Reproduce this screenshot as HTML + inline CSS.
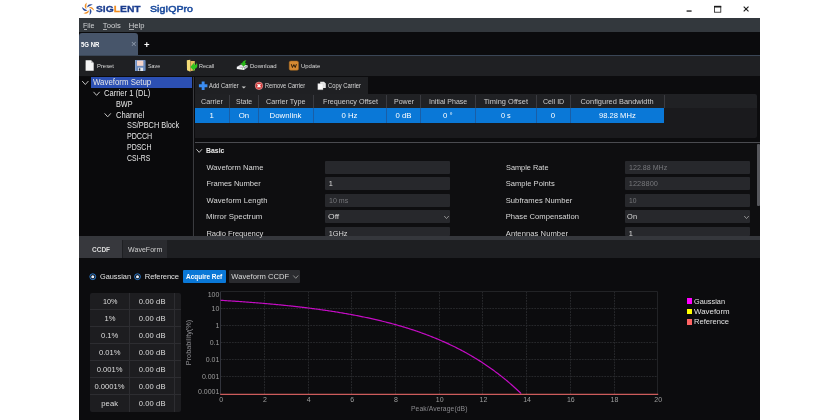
<!DOCTYPE html>
<html><head><meta charset="utf-8"><title>SigIQPro</title>
<style>
html,body{margin:0;padding:0;background:#fff;}
body{width:840px;height:420px;position:relative;overflow:hidden;font-family:"Liberation Sans",sans-serif;}
.r{position:absolute;}
.tx{position:absolute;left:0;top:0;width:840px;height:420px;will-change:transform;}
.t{position:absolute;white-space:nowrap;}
svg{position:absolute;left:0;top:0;}
u{text-decoration:underline;text-underline-offset:0.5px;text-decoration-thickness:0.6px;}
</style></head><body>
<div class="r" style="left:79.30px;top:17.80px;width:680.70px;height:14.40px;background:#33383d;"></div>
<div class="r" style="left:79.30px;top:32.20px;width:680.70px;height:23.00px;background:#0b0b0d;"></div>
<div class="r" style="left:79.30px;top:33.00px;width:58.70px;height:22.50px;background:#47556a;border-radius:3px 3px 0 0;"></div>
<div class="r" style="left:79.30px;top:55.00px;width:680.70px;height:1.00px;background:#3a4656;"></div>
<div class="r" style="left:79.30px;top:56.00px;width:680.70px;height:20.30px;background:#1f2023;"></div>
<div class="r" style="left:79.30px;top:76.30px;width:680.70px;height:343.70px;background:#0c0c0e;"></div>
<div class="r" style="left:79.30px;top:76.80px;width:113.00px;height:159.50px;background:#0a0a0c;"></div>
<div class="r" style="left:91.25px;top:77.00px;width:101.00px;height:11.00px;background:#2c50b4;"></div>
<div class="r" style="left:193.40px;top:76.80px;width:0.90px;height:159.50px;background:#3a3b3f;"></div>
<div class="r" style="left:194.60px;top:77.00px;width:173.40px;height:17.00px;background:#1f2023;"></div>
<div class="r" style="left:194.60px;top:94.00px;width:562.90px;height:14.00px;background:#202124;border-radius:0 2px 0 0;"></div>
<div class="r" style="left:194.60px;top:108.00px;width:562.90px;height:30.00px;background:#1a1a1d;border-radius:0 0 2px 0;"></div>
<div class="r" style="left:194.60px;top:108.00px;width:469.70px;height:14.50px;background:#0a78d7;"></div>
<div class="r" style="left:228.75px;top:95.00px;width:1.00px;height:12.50px;background:#3a3b40;"></div>
<div class="r" style="left:258.25px;top:95.00px;width:1.00px;height:12.50px;background:#3a3b40;"></div>
<div class="r" style="left:312.70px;top:95.00px;width:1.00px;height:12.50px;background:#3a3b40;"></div>
<div class="r" style="left:385.75px;top:95.00px;width:1.00px;height:12.50px;background:#3a3b40;"></div>
<div class="r" style="left:420.00px;top:95.00px;width:1.00px;height:12.50px;background:#3a3b40;"></div>
<div class="r" style="left:474.75px;top:95.00px;width:1.00px;height:12.50px;background:#3a3b40;"></div>
<div class="r" style="left:535.75px;top:95.00px;width:1.00px;height:12.50px;background:#3a3b40;"></div>
<div class="r" style="left:570.25px;top:95.00px;width:1.00px;height:12.50px;background:#3a3b40;"></div>
<div class="r" style="left:663.75px;top:95.00px;width:1.00px;height:12.50px;background:#3a3b40;"></div>
<div class="r" style="left:228.75px;top:108.00px;width:1.00px;height:14.50px;background:#1a5ea6;"></div>
<div class="r" style="left:258.25px;top:108.00px;width:1.00px;height:14.50px;background:#1a5ea6;"></div>
<div class="r" style="left:312.70px;top:108.00px;width:1.00px;height:14.50px;background:#1a5ea6;"></div>
<div class="r" style="left:385.75px;top:108.00px;width:1.00px;height:14.50px;background:#1a5ea6;"></div>
<div class="r" style="left:420.00px;top:108.00px;width:1.00px;height:14.50px;background:#1a5ea6;"></div>
<div class="r" style="left:474.75px;top:108.00px;width:1.00px;height:14.50px;background:#1a5ea6;"></div>
<div class="r" style="left:535.75px;top:108.00px;width:1.00px;height:14.50px;background:#1a5ea6;"></div>
<div class="r" style="left:570.25px;top:108.00px;width:1.00px;height:14.50px;background:#1a5ea6;"></div>
<div class="r" style="left:194.60px;top:142.00px;width:565.40px;height:1.00px;background:#4a4b50;"></div>
<div class="r" style="left:194.60px;top:143.00px;width:565.40px;height:93.30px;background:#0e0e10;"></div>
<div class="r" style="left:757.00px;top:144.00px;width:3.00px;height:61.50px;background:#56575c;border-radius:1px;"></div>
<div class="r" style="left:325.00px;top:160.90px;width:125.20px;height:13.00px;background:#27282c;border-radius:1px;"></div>
<div class="r" style="left:625.00px;top:160.90px;width:125.20px;height:13.00px;background:#27282c;border-radius:1px;"></div>
<div class="r" style="left:325.00px;top:177.30px;width:125.20px;height:13.00px;background:#27282c;border-radius:1px;"></div>
<div class="r" style="left:625.00px;top:177.30px;width:125.20px;height:13.00px;background:#27282c;border-radius:1px;"></div>
<div class="r" style="left:325.00px;top:193.70px;width:125.20px;height:13.00px;background:#27282c;border-radius:1px;"></div>
<div class="r" style="left:625.00px;top:193.70px;width:125.20px;height:13.00px;background:#27282c;border-radius:1px;"></div>
<div class="r" style="left:325.00px;top:210.10px;width:125.20px;height:13.00px;background:#27282c;border-radius:1px;"></div>
<div class="r" style="left:625.00px;top:210.10px;width:125.20px;height:13.00px;background:#27282c;border-radius:1px;"></div>
<div class="r" style="left:325.00px;top:226.50px;width:125.20px;height:9.80px;background:#27282c;border-radius:1px;"></div>
<div class="r" style="left:625.00px;top:226.50px;width:125.20px;height:9.80px;background:#27282c;border-radius:1px;"></div>
<div class="r" style="left:79.30px;top:236.30px;width:680.70px;height:3.70px;background:#35373c;"></div>
<div class="r" style="left:79.30px;top:240.00px;width:680.70px;height:18.00px;background:#1e1f22;"></div>
<div class="r" style="left:79.30px;top:239.60px;width:42.90px;height:18.40px;background:#37383d;"></div>
<div class="r" style="left:123.10px;top:239.60px;width:43.80px;height:18.40px;background:#2a2b2f;"></div>
<div class="r" style="left:79.30px;top:258.00px;width:680.70px;height:162.00px;background:#0c0c0e;"></div>
<div class="r" style="left:183.00px;top:270.00px;width:43.00px;height:13.00px;background:#0a78d7;border-radius:1px;"></div>
<div class="r" style="left:228.70px;top:270.00px;width:71.30px;height:13.00px;background:#2a2b2f;border-radius:1px;"></div>
<div class="r" style="left:90.00px;top:292.50px;width:91.00px;height:119.10px;background:#1d1d20;border-radius:2px;"></div>
<div class="r" style="left:90.00px;top:309.00px;width:91.00px;height:1.00px;background:#2d2d31;"></div>
<div class="r" style="left:90.00px;top:326.00px;width:91.00px;height:1.00px;background:#2d2d31;"></div>
<div class="r" style="left:90.00px;top:343.00px;width:91.00px;height:1.00px;background:#2d2d31;"></div>
<div class="r" style="left:90.00px;top:360.00px;width:91.00px;height:1.00px;background:#2d2d31;"></div>
<div class="r" style="left:90.00px;top:377.00px;width:91.00px;height:1.00px;background:#2d2d31;"></div>
<div class="r" style="left:90.00px;top:394.00px;width:91.00px;height:1.00px;background:#2d2d31;"></div>
<div class="r" style="left:129.00px;top:292.50px;width:1.00px;height:119.10px;background:#2d2d31;"></div>
<div class="r" style="left:174.00px;top:292.50px;width:1.00px;height:119.10px;background:#2d2d31;"></div>
<div class="r" style="left:83.50px;top:29.10px;width:3.90px;height:0.90px;background:#a9abae;"></div>
<div class="r" style="left:102.80px;top:29.10px;width:4.20px;height:0.90px;background:#a9abae;"></div>
<div class="r" style="left:128.90px;top:29.10px;width:4.90px;height:0.90px;background:#a9abae;"></div>
<div class="r" style="left:686.70px;top:298.35px;width:5.60px;height:5.70px;background:#ff00ff;"></div>
<div class="r" style="left:686.70px;top:308.65px;width:5.60px;height:5.70px;background:#ffff00;"></div>
<div class="r" style="left:686.70px;top:318.95px;width:5.60px;height:5.70px;background:#ff6464;"></div>
<svg width="840" height="420" viewBox="0 0 840 420">
<g stroke="#27282b" stroke-width="1" stroke-dasharray="1.8 1" fill="none"><line x1="220.70" y1="308.50" x2="657.70" y2="308.50"/><line x1="220.70" y1="325.50" x2="657.70" y2="325.50"/><line x1="220.70" y1="342.50" x2="657.70" y2="342.50"/><line x1="220.70" y1="359.50" x2="657.70" y2="359.50"/><line x1="220.70" y1="376.50" x2="657.70" y2="376.50"/><line x1="264.50" y1="291.60" x2="264.50" y2="394.40"/><line x1="308.50" y1="291.60" x2="308.50" y2="394.40"/><line x1="351.50" y1="291.60" x2="351.50" y2="394.40"/><line x1="395.50" y1="291.60" x2="395.50" y2="394.40"/><line x1="439.50" y1="291.60" x2="439.50" y2="394.40"/><line x1="482.50" y1="291.60" x2="482.50" y2="394.40"/><line x1="526.50" y1="291.60" x2="526.50" y2="394.40"/><line x1="570.50" y1="291.60" x2="570.50" y2="394.40"/><line x1="614.50" y1="291.60" x2="614.50" y2="394.40"/></g>
<path d="M220.70 291.50 H657.50 V394.40" stroke="#222326" stroke-width="1" fill="none"/>
<path d="M220.50 291.60 V394.40" stroke="#32343c" stroke-width="1" fill="none"/>
<path d="M220.70 300.32 L221.79 300.39 L222.88 300.46 L223.98 300.52 L225.07 300.59 L226.16 300.66 L227.25 300.73 L228.35 300.80 L229.44 300.87 L230.53 300.94 L231.62 301.01 L232.72 301.08 L233.81 301.15 L234.90 301.22 L236.00 301.30 L237.09 301.37 L238.18 301.45 L239.27 301.52 L240.37 301.60 L241.46 301.67 L242.55 301.75 L243.64 301.83 L244.74 301.91 L245.83 301.99 L246.92 302.07 L248.01 302.15 L249.10 302.23 L250.20 302.31 L251.29 302.40 L252.38 302.48 L253.48 302.57 L254.57 302.65 L255.66 302.74 L256.75 302.83 L257.85 302.91 L258.94 303.00 L260.03 303.09 L261.12 303.18 L262.22 303.27 L263.31 303.37 L264.40 303.46 L265.49 303.55 L266.59 303.65 L267.68 303.74 L268.77 303.84 L269.86 303.94 L270.95 304.04 L272.05 304.13 L273.14 304.23 L274.23 304.34 L275.32 304.44 L276.42 304.54 L277.51 304.65 L278.60 304.75 L279.69 304.86 L280.79 304.96 L281.88 305.07 L282.97 305.18 L284.06 305.29 L285.16 305.40 L286.25 305.51 L287.34 305.63 L288.43 305.74 L289.53 305.86 L290.62 305.97 L291.71 306.09 L292.80 306.21 L293.90 306.33 L294.99 306.45 L296.08 306.57 L297.17 306.69 L298.27 306.82 L299.36 306.94 L300.45 307.07 L301.54 307.20 L302.64 307.33 L303.73 307.46 L304.82 307.59 L305.91 307.72 L307.01 307.86 L308.10 307.99 L309.19 308.13 L310.28 308.27 L311.38 308.41 L312.47 308.55 L313.56 308.69 L314.65 308.83 L315.75 308.98 L316.84 309.13 L317.93 309.27 L319.02 309.42 L320.12 309.57 L321.21 309.73 L322.30 309.88 L323.39 310.04 L324.49 310.19 L325.58 310.35 L326.67 310.51 L327.76 310.67 L328.86 310.84 L329.95 311.00 L331.04 311.17 L332.13 311.34 L333.23 311.51 L334.32 311.68 L335.41 311.85 L336.50 312.02 L337.60 312.20 L338.69 312.38 L339.78 312.56 L340.87 312.74 L341.97 312.93 L343.06 313.11 L344.15 313.30 L345.24 313.49 L346.34 313.68 L347.43 313.87 L348.52 314.07 L349.61 314.26 L350.71 314.46 L351.80 314.66 L352.89 314.87 L353.98 315.07 L355.08 315.28 L356.17 315.49 L357.26 315.70 L358.35 315.91 L359.45 316.13 L360.54 316.35 L361.63 316.57 L362.72 316.79 L363.82 317.02 L364.91 317.24 L366.00 317.47 L367.09 317.70 L368.19 317.94 L369.28 318.17 L370.37 318.41 L371.46 318.65 L372.56 318.90 L373.65 319.14 L374.74 319.39 L375.83 319.64 L376.93 319.90 L378.02 320.15 L379.11 320.41 L380.20 320.68 L381.30 320.94 L382.39 321.21 L383.48 321.48 L384.57 321.75 L385.67 322.03 L386.76 322.30 L387.85 322.59 L388.94 322.87 L390.04 323.16 L391.13 323.45 L392.22 323.74 L393.31 324.04 L394.41 324.34 L395.50 324.64 L396.59 324.95 L397.68 325.26 L398.78 325.57 L399.87 325.88 L400.96 326.20 L402.05 326.52 L403.15 326.85 L404.24 327.18 L405.33 327.51 L406.42 327.85 L407.52 328.19 L408.61 328.53 L409.70 328.88 L410.79 329.23 L411.89 329.58 L412.98 329.94 L414.07 330.30 L415.16 330.67 L416.26 331.04 L417.35 331.41 L418.44 331.79 L419.53 332.17 L420.63 332.55 L421.72 332.94 L422.81 333.34 L423.90 333.73 L425.00 334.14 L426.09 334.54 L427.18 334.95 L428.28 335.37 L429.37 335.79 L430.46 336.21 L431.55 336.64 L432.65 337.07 L433.74 337.51 L434.83 337.95 L435.92 338.40 L437.02 338.85 L438.11 339.31 L439.20 339.77 L440.29 340.24 L441.39 340.71 L442.48 341.19 L443.57 341.67 L444.66 342.16 L445.76 342.65 L446.85 343.15 L447.94 343.65 L449.03 344.16 L450.13 344.67 L451.22 345.19 L452.31 345.72 L453.40 346.25 L454.50 346.79 L455.59 347.33 L456.68 347.88 L457.77 348.43 L458.87 348.99 L459.96 349.56 L461.05 350.13 L462.14 350.71 L463.24 351.30 L464.33 351.89 L465.42 352.49 L466.51 353.09 L467.61 353.70 L468.70 354.32 L469.79 354.94 L470.88 355.58 L471.98 356.21 L473.07 356.86 L474.16 357.51 L475.25 358.17 L476.35 358.84 L477.44 359.51 L478.53 360.20 L479.62 360.88 L480.72 361.58 L481.81 362.29 L482.90 363.00 L483.99 363.72 L485.09 364.45 L486.18 365.18 L487.27 365.93 L488.36 366.68 L489.46 367.44 L490.55 368.21 L491.64 368.99 L492.73 369.77 L493.83 370.57 L494.92 371.37 L496.01 372.18 L497.10 373.00 L498.20 373.83 L499.29 374.67 L500.38 375.52 L501.47 376.38 L502.57 377.25 L503.66 378.13 L504.75 379.01 L505.84 379.91 L506.94 380.82 L508.03 381.74 L509.12 382.66 L510.21 383.60 L511.31 384.55 L512.40 385.51 L513.49 386.48 L514.58 387.46 L515.68 388.45 L516.77 389.45 L517.86 390.46 L518.95 391.49 L520.05 392.53 L521.14 393.57" stroke="#c40cc4" stroke-width="1.2" fill="none"/>
<line x1="220.20" y1="394.40" x2="658.20" y2="394.40" stroke="#cd5c5c" stroke-width="1.3"/>
<path d="M82.20 81.06 l3.10 3.47 l3.10 -3.47" stroke="#c2c2c2" stroke-width="1.00" fill="none"/>
<path d="M93.50 91.86 l3.10 3.47 l3.10 -3.47" stroke="#c2c2c2" stroke-width="1.00" fill="none"/>
<path d="M104.60 113.36 l3.10 3.47 l3.10 -3.47" stroke="#c2c2c2" stroke-width="1.00" fill="none"/>
<path d="M196.40 149.23 l2.80 3.14 l2.80 -3.14" stroke="#c2c2c2" stroke-width="1.00" fill="none"/>
<path d="M444.20 216.01 l2.30 2.58 l2.30 -2.58" stroke="#a4a4a4" stroke-width="0.80" fill="none"/>
<path d="M744.20 216.01 l2.30 2.58 l2.30 -2.58" stroke="#a4a4a4" stroke-width="0.80" fill="none"/>
<path d="M293.25 275.50 l2.50 2.80 l2.50 -2.80" stroke="#a4a4a4" stroke-width="0.80" fill="none"/>
<rect x="686.6" y="10.4" width="5" height="1.3" fill="#1a1a1a"/>
<rect x="714.6" y="6.4" width="6.2" height="5.8" fill="none" stroke="#1a1a1a" stroke-width="0.8"/><rect x="714.2" y="5.8" width="7" height="1.7" fill="#1a1a1a"/>
<path d="M743.7 6.6 l4.8 4.8 M748.5 6.6 l-4.8 4.8" stroke="#1a1a1a" stroke-width="1.1"/>
<circle cx="92.75" cy="276.7" r="2.9" fill="#0c0c0e" stroke="#2f86e0" stroke-width="0.9"/><circle cx="92.75" cy="276.7" r="1.5" fill="#eaf2ff"/>
<circle cx="137.50" cy="276.7" r="2.9" fill="#0c0c0e" stroke="#2f86e0" stroke-width="0.9"/><circle cx="137.50" cy="276.7" r="1.5" fill="#eaf2ff"/>
<path d="M241.6 86.6 h4.4 l-2.2 2 z" fill="#c8c8c8"/>
<g transform="translate(88.1 8.9)"><path d="M0.6 -1.6 Q4.8 -3.3 6.2 1.9 Q3.4 -0.2 0.6 -1.6 Z" fill="#f0922b" transform="rotate(0)"/><path d="M0.6 -1.6 Q4.8 -3.3 6.2 1.9 Q3.4 -0.2 0.6 -1.6 Z" fill="#2b4c9c" transform="rotate(60)"/><path d="M0.6 -1.6 Q4.8 -3.3 6.2 1.9 Q3.4 -0.2 0.6 -1.6 Z" fill="#f0922b" transform="rotate(120)"/><path d="M0.6 -1.6 Q4.8 -3.3 6.2 1.9 Q3.4 -0.2 0.6 -1.6 Z" fill="#2b4c9c" transform="rotate(180)"/><path d="M0.6 -1.6 Q4.8 -3.3 6.2 1.9 Q3.4 -0.2 0.6 -1.6 Z" fill="#f0922b" transform="rotate(240)"/><path d="M0.6 -1.6 Q4.8 -3.3 6.2 1.9 Q3.4 -0.2 0.6 -1.6 Z" fill="#2b4c9c" transform="rotate(300)"/></g>
<path d="M85.6 60.2 h5.4 l2.7 2.7 v7.8 h-8.1 z" fill="#f4f4f4"/><path d="M91 60.2 v2.7 h2.7 z" fill="#c4c4c4"/>
<rect x="135" y="60" width="10.6" height="11" rx="0.8" fill="#6c8bbd"/><rect x="135" y="60" width="1.2" height="11" fill="#88a4d0"/><rect x="137" y="60.6" width="6.3" height="5.2" fill="#f6d8ce"/><path d="M137 62.4 h6.3 M137 64.1 h6.3" stroke="#eec4b8" stroke-width="0.4"/><rect x="138" y="67.7" width="5.1" height="3.3" fill="#e4e8ee"/><rect x="138.8" y="68.3" width="1.5" height="2.3" fill="#2c3c5c"/>
<path d="M186.8 60.2 L190.3 59.8 L190.4 71.8 L187 70.2 Z" fill="#f3dc78"/><path d="M190.4 61 H194.8 V70.3 L190.4 71.3 Z" fill="#e6bc5c"/><path d="M190.3 67 L194.3 62.6 L194.3 64.9 Q196.9 64.7 196.7 62.2 Q198.8 67.9 194.3 69.1 L194.3 71.2 Z" fill="#2fc41f"/>
<path d="M236.8 66.8 L241 64.4 L247.8 65.2 L244 67.8 Z" fill="#dedee3"/><path d="M236.8 66.8 L244 67.8 V69.9 L236.8 68.9 Z" fill="#f7f7f9"/><path d="M244 67.8 L247.8 65.2 V67.2 L244 69.9 Z" fill="#bfc0c8"/><circle cx="242.4" cy="68.8" r="0.45" fill="#38c028"/><path d="M246.4 60.2 Q242.6 60.6 242.2 63.2 L240.4 63.2 L243.6 66.8 L246.6 63.2 L245 63.2 Q245 61.6 246.4 60.2 Z" fill="#28b818"/>
<rect x="289.2" y="61" width="9.3" height="9.3" rx="1.6" fill="#d68a32" stroke="#9c6420" stroke-width="0.5"/><path d="M291.3 64.2 l1.15 3.3 l1.4 -2.9 l1.4 2.9 l1.15 -3.3" stroke="#24180a" stroke-width="0.95" fill="none" stroke-linejoin="round"/>
<path d="M201.7 81.6 h2.9 v2.75 h2.8 v2.9 h-2.8 v2.75 h-2.9 v-2.75 h-2.8 v-2.9 h2.8 z" fill="#3b8df2"/>
<circle cx="259" cy="85.8" r="3.7" fill="#d23434" stroke="#e9a8a8" stroke-width="0.7"/><path d="M257.5 84.3 l3 3 M260.5 84.3 l-3 3" stroke="#fff" stroke-width="1.3"/>
<path d="M320.2 81.7 h3.8 l1.8 1.8 v4.6 h-5.6 z" fill="#e6e6e6"/><path d="M317.8 83.6 h5.2 v6.1 h-5.2 z" fill="#fafafa" stroke="#bdbdbd" stroke-width="0.3"/>
</svg>
<div class="tx">
<div class="t" style="left:83.40px;top:21px;font-size:7.60px;line-height:10px;color:#d2d4d6;transform:scaleX(0.9390);transform-origin:0 50%;">File</div>
<div class="t" style="left:102.75px;top:21px;font-size:7.60px;line-height:10px;color:#d2d4d6;letter-spacing:0.102px;">Tools</div>
<div class="t" style="left:128.75px;top:21px;font-size:7.60px;line-height:10px;color:#d2d4d6;letter-spacing:0.073px;">Help</div>
<div class="t" style="left:80.60px;top:40px;font-size:7.00px;line-height:9px;color:#ffffff;font-weight:700;transform:scaleX(0.8601);transform-origin:0 50%;">5G NR</div>
<div class="t" style="left:131.03px;top:38px;font-size:9.50px;line-height:12px;color:#97a2b2;">×</div>
<div class="t" style="left:143.93px;top:39px;font-size:9.50px;line-height:12px;color:#ffffff;font-weight:700;">+</div>
<div class="t" style="left:96.50px;top:62px;font-size:6.20px;line-height:8px;color:#dadada;transform:scaleX(0.9487);transform-origin:0 50%;">Preset</div>
<div class="t" style="left:147.75px;top:62px;font-size:6.20px;line-height:8px;color:#dadada;transform:scaleX(0.8668);transform-origin:0 50%;">Save</div>
<div class="t" style="left:198.75px;top:62px;font-size:6.20px;line-height:8px;color:#dadada;transform:scaleX(0.8851);transform-origin:0 50%;">Recall</div>
<div class="t" style="left:249.50px;top:62px;font-size:6.20px;line-height:8px;color:#dadada;transform:scaleX(0.9701);transform-origin:0 50%;">Download</div>
<div class="t" style="left:300.75px;top:62px;font-size:6.20px;line-height:8px;color:#dadada;transform:scaleX(0.9628);transform-origin:0 50%;">Update</div>
<div class="t" style="left:93.00px;top:77px;font-size:8.20px;line-height:11px;color:#e6e6e6;transform:scaleX(0.9586);transform-origin:0 50%;">Waveform Setup</div>
<div class="t" style="left:104.25px;top:88px;font-size:8.20px;line-height:11px;color:#e6e6e6;transform:scaleX(0.9228);transform-origin:0 50%;">Carrier 1 (DL)</div>
<div class="t" style="left:115.50px;top:99px;font-size:8.20px;line-height:11px;color:#e6e6e6;transform:scaleX(0.8834);transform-origin:0 50%;">BWP</div>
<div class="t" style="left:115.50px;top:110px;font-size:8.20px;line-height:11px;color:#e6e6e6;transform:scaleX(0.9248);transform-origin:0 50%;">Channel</div>
<div class="t" style="left:126.75px;top:120px;font-size:8.20px;line-height:11px;color:#e6e6e6;transform:scaleX(0.8958);transform-origin:0 50%;">SS/PBCH Block</div>
<div class="t" style="left:126.75px;top:131px;font-size:8.20px;line-height:11px;color:#e6e6e6;transform:scaleX(0.8660);transform-origin:0 50%;">PDCCH</div>
<div class="t" style="left:126.75px;top:142px;font-size:8.20px;line-height:11px;color:#e6e6e6;transform:scaleX(0.8535);transform-origin:0 50%;">PDSCH</div>
<div class="t" style="left:126.75px;top:153px;font-size:8.20px;line-height:11px;color:#e6e6e6;transform:scaleX(0.8366);transform-origin:0 50%;">CSI-RS</div>
<div class="t" style="left:209.00px;top:82px;font-size:6.40px;line-height:8px;color:#d8d8d8;transform:scaleX(0.9091);transform-origin:0 50%;">Add Carrier</div>
<div class="t" style="left:264.75px;top:82px;font-size:6.40px;line-height:8px;color:#d8d8d8;transform:scaleX(0.8911);transform-origin:0 50%;">Remove Carrier</div>
<div class="t" style="left:327.50px;top:82px;font-size:6.40px;line-height:8px;color:#d8d8d8;transform:scaleX(0.9097);transform-origin:0 50%;">Copy Carrier</div>
<div class="t" style="left:200.60px;top:97px;font-size:7.40px;line-height:10px;color:#cdcdcd;transform:scaleX(0.9685);transform-origin:0 50%;">Carrier</div>
<div class="t" style="left:235.75px;top:97px;font-size:7.40px;line-height:10px;color:#cdcdcd;transform:scaleX(0.9404);transform-origin:0 50%;">State</div>
<div class="t" style="left:266.00px;top:97px;font-size:7.40px;line-height:10px;color:#cdcdcd;transform:scaleX(0.9734);transform-origin:0 50%;">Carrier Type</div>
<div class="t" style="left:322.50px;top:97px;font-size:7.40px;line-height:10px;color:#cdcdcd;transform:scaleX(0.9713);transform-origin:0 50%;">Frequency Offset</div>
<div class="t" style="left:393.75px;top:97px;font-size:7.40px;line-height:10px;color:#cdcdcd;transform:scaleX(0.9535);transform-origin:0 50%;">Power</div>
<div class="t" style="left:428.75px;top:97px;font-size:7.40px;line-height:10px;color:#cdcdcd;transform:scaleX(0.9488);transform-origin:0 50%;">Initial Phase</div>
<div class="t" style="left:483.75px;top:97px;font-size:7.40px;line-height:10px;color:#cdcdcd;letter-spacing:0.055px;">Timing Offset</div>
<div class="t" style="left:542.50px;top:97px;font-size:7.40px;line-height:10px;color:#cdcdcd;transform:scaleX(0.9570);transform-origin:0 50%;">Cell ID</div>
<div class="t" style="left:580.50px;top:97px;font-size:7.40px;line-height:10px;color:#cdcdcd;letter-spacing:0.023px;">Configured Bandwidth</div>
<div class="t" style="left:209.58px;top:111px;font-size:7.80px;line-height:10px;color:#ffffff;">1</div>
<div class="t" style="left:238.75px;top:111px;font-size:7.80px;line-height:10px;color:#ffffff;letter-spacing:-0.155px;">On</div>
<div class="t" style="left:269.50px;top:111px;font-size:7.80px;line-height:10px;color:#ffffff;letter-spacing:0.050px;">Downlink</div>
<div class="t" style="left:341.50px;top:111px;font-size:7.80px;line-height:10px;color:#ffffff;letter-spacing:-0.013px;">0 Hz</div>
<div class="t" style="left:395.50px;top:111px;font-size:7.80px;line-height:10px;color:#ffffff;letter-spacing:-0.015px;">0 dB</div>
<div class="t" style="left:443.00px;top:111px;font-size:7.80px;line-height:10px;color:#ffffff;letter-spacing:-0.062px;">0 °</div>
<div class="t" style="left:500.75px;top:111px;font-size:7.80px;line-height:10px;color:#ffffff;transform:scaleX(0.9370);transform-origin:0 50%;">0 s</div>
<div class="t" style="left:550.83px;top:111px;font-size:7.80px;line-height:10px;color:#ffffff;">0</div>
<div class="t" style="left:598.75px;top:111px;font-size:7.80px;line-height:10px;color:#ffffff;transform:scaleX(0.9744);transform-origin:0 50%;">98.28 MHz</div>
<div class="t" style="left:206.00px;top:146px;font-size:7.40px;line-height:10px;color:#ececec;font-weight:700;transform:scaleX(0.9318);transform-origin:0 50%;">Basic</div>
<div class="t" style="left:206.40px;top:163px;font-size:7.60px;line-height:10px;color:#dadada;letter-spacing:0.031px;">Waveform Name</div>
<div class="t" style="left:505.75px;top:163px;font-size:7.60px;line-height:10px;color:#dadada;transform:scaleX(0.9673);transform-origin:0 50%;">Sample Rate</div>
<div class="t" style="left:628.75px;top:163px;font-size:7.40px;line-height:10px;color:#76777b;transform:scaleX(0.9587);transform-origin:0 50%;">122.88 MHz</div>
<div class="t" style="left:206.40px;top:179px;font-size:7.60px;line-height:10px;color:#dadada;letter-spacing:-0.046px;">Frames Number</div>
<div class="t" style="left:505.75px;top:179px;font-size:7.60px;line-height:10px;color:#dadada;">Sample Points</div>
<div class="t" style="left:328.75px;top:179px;font-size:7.40px;line-height:10px;color:#dadada;">1</div>
<div class="t" style="left:628.75px;top:179px;font-size:7.40px;line-height:10px;color:#76777b;letter-spacing:0.073px;">1228800</div>
<div class="t" style="left:206.40px;top:196px;font-size:7.60px;line-height:10px;color:#dadada;letter-spacing:0.100px;">Waveform Length</div>
<div class="t" style="left:505.75px;top:196px;font-size:7.60px;line-height:10px;color:#dadada;letter-spacing:0.040px;">Subframes Number</div>
<div class="t" style="left:328.75px;top:196px;font-size:7.40px;line-height:10px;color:#76777b;transform:scaleX(0.9553);transform-origin:0 50%;">10 ms</div>
<div class="t" style="left:628.75px;top:196px;font-size:7.40px;line-height:10px;color:#76777b;transform:scaleX(0.9112);transform-origin:0 50%;">10</div>
<div class="t" style="left:206.40px;top:212px;font-size:7.60px;line-height:10px;color:#dadada;transform:scaleX(1.0344);transform-origin:0 50%;">Mirror Spectrum</div>
<div class="t" style="left:505.75px;top:212px;font-size:7.60px;line-height:10px;color:#dadada;letter-spacing:0.034px;">Phase Compensation</div>
<div class="t" style="left:327.50px;top:212px;font-size:7.40px;line-height:10px;color:#dadada;transform:scaleX(1.1558);transform-origin:0 50%;">Off</div>
<div class="t" style="left:627.00px;top:212px;font-size:7.40px;line-height:10px;color:#dadada;letter-spacing:0.129px;">On</div>
<div class="t" style="left:206.40px;top:229px;font-size:7.60px;line-height:10px;color:#dadada;letter-spacing:-0.073px;">Radio Frequency</div>
<div class="t" style="left:505.75px;top:229px;font-size:7.60px;line-height:10px;color:#dadada;letter-spacing:0.071px;">Antennas Number</div>
<div class="t" style="left:328.75px;top:229px;font-size:7.40px;line-height:10px;color:#dadada;letter-spacing:-0.055px;">1GHz</div>
<div class="t" style="left:628.75px;top:229px;font-size:7.40px;line-height:10px;color:#dadada;">1</div>
<div class="t" style="left:91.90px;top:245px;font-size:6.80px;line-height:9px;color:#dcdcdc;font-weight:700;transform:scaleX(0.9584);transform-origin:0 50%;">CCDF</div>
<div class="t" style="left:128.10px;top:245px;font-size:7.00px;line-height:9px;color:#cfcfcf;letter-spacing:0.026px;">WaveForm</div>
<div class="t" style="left:100.00px;top:272px;font-size:7.60px;line-height:10px;color:#e2e2e2;transform:scaleX(0.9655);transform-origin:0 50%;">Gaussian</div>
<div class="t" style="left:144.75px;top:272px;font-size:7.60px;line-height:10px;color:#e2e2e2;letter-spacing:-0.102px;">Reference</div>
<div class="t" style="left:186.25px;top:272px;font-size:6.80px;line-height:9px;color:#ffffff;font-weight:700;transform:scaleX(0.9498);transform-origin:0 50%;">Acquire Ref</div>
<div class="t" style="left:231.25px;top:272px;font-size:7.60px;line-height:10px;color:#dadada;letter-spacing:0.036px;">Waveform CCDF</div>
<div class="t" style="left:102.70px;top:297px;font-size:7.60px;line-height:10px;color:#dedede;transform:scaleX(0.9532);transform-origin:0 50%;">10%</div>
<div class="t" style="left:138.80px;top:297px;font-size:7.60px;line-height:10px;color:#dedede;letter-spacing:0.083px;">0.00 dB</div>
<div class="t" style="left:104.41px;top:314px;font-size:7.60px;line-height:10px;color:#dedede;">1%</div>
<div class="t" style="left:138.80px;top:314px;font-size:7.60px;line-height:10px;color:#dedede;letter-spacing:0.083px;">0.00 dB</div>
<div class="t" style="left:101.00px;top:331px;font-size:7.60px;line-height:10px;color:#dedede;letter-spacing:-0.008px;">0.1%</div>
<div class="t" style="left:138.80px;top:331px;font-size:7.60px;line-height:10px;color:#dedede;letter-spacing:0.083px;">0.00 dB</div>
<div class="t" style="left:99.00px;top:348px;font-size:7.60px;line-height:10px;color:#dedede;letter-spacing:-0.012px;">0.01%</div>
<div class="t" style="left:138.80px;top:348px;font-size:7.60px;line-height:10px;color:#dedede;letter-spacing:0.083px;">0.00 dB</div>
<div class="t" style="left:96.75px;top:365px;font-size:7.60px;line-height:10px;color:#dedede;letter-spacing:-0.005px;">0.001%</div>
<div class="t" style="left:138.80px;top:365px;font-size:7.60px;line-height:10px;color:#dedede;letter-spacing:0.083px;">0.00 dB</div>
<div class="t" style="left:94.50px;top:382px;font-size:7.60px;line-height:10px;color:#dedede;">0.0001%</div>
<div class="t" style="left:138.80px;top:382px;font-size:7.60px;line-height:10px;color:#dedede;letter-spacing:0.083px;">0.00 dB</div>
<div class="t" style="left:101.25px;top:399px;font-size:7.60px;line-height:10px;color:#dedede;letter-spacing:0.090px;">peak</div>
<div class="t" style="left:138.80px;top:399px;font-size:7.60px;line-height:10px;color:#dedede;letter-spacing:0.083px;">0.00 dB</div>
<div class="t" style="left:207.72px;top:290px;font-size:7.00px;line-height:9px;color:#9e9e9e;">100</div>
<div class="t" style="left:211.61px;top:304px;font-size:7.00px;line-height:9px;color:#9e9e9e;">10</div>
<div class="t" style="left:215.51px;top:321px;font-size:7.00px;line-height:9px;color:#9e9e9e;">1</div>
<div class="t" style="left:209.67px;top:338px;font-size:7.00px;line-height:9px;color:#9e9e9e;">0.1</div>
<div class="t" style="left:205.78px;top:355px;font-size:7.00px;line-height:9px;color:#9e9e9e;">0.01</div>
<div class="t" style="left:201.88px;top:372px;font-size:7.00px;line-height:9px;color:#9e9e9e;">0.001</div>
<div class="t" style="left:197.99px;top:387px;font-size:7.00px;line-height:9px;color:#9e9e9e;">0.0001</div>
<div class="t" style="left:219.25px;top:395px;font-size:7.00px;line-height:9px;color:#9e9e9e;">0</div>
<div class="t" style="left:262.95px;top:395px;font-size:7.00px;line-height:9px;color:#9e9e9e;">2</div>
<div class="t" style="left:306.65px;top:395px;font-size:7.00px;line-height:9px;color:#9e9e9e;">4</div>
<div class="t" style="left:350.35px;top:395px;font-size:7.00px;line-height:9px;color:#9e9e9e;">6</div>
<div class="t" style="left:394.05px;top:395px;font-size:7.00px;line-height:9px;color:#9e9e9e;">8</div>
<div class="t" style="left:435.81px;top:395px;font-size:7.00px;line-height:9px;color:#9e9e9e;">10</div>
<div class="t" style="left:479.51px;top:395px;font-size:7.00px;line-height:9px;color:#9e9e9e;">12</div>
<div class="t" style="left:523.21px;top:395px;font-size:7.00px;line-height:9px;color:#9e9e9e;">14</div>
<div class="t" style="left:566.91px;top:395px;font-size:7.00px;line-height:9px;color:#9e9e9e;">16</div>
<div class="t" style="left:610.61px;top:395px;font-size:7.00px;line-height:9px;color:#9e9e9e;">18</div>
<div class="t" style="left:654.31px;top:395px;font-size:7.00px;line-height:9px;color:#9e9e9e;">20</div>
<div class="t" style="left:411.00px;top:404px;font-size:6.80px;line-height:9px;color:#8a8a8e;letter-spacing:0.071px;">Peak/Average(dB)</div>
<div class="t" style="left:164.58px;top:338.00px;font-size:7.3px;line-height:9px;color:#8a8a8e;transform:rotate(-90deg);transform-origin:center center;width:47.44px;text-align:center;">Probability(%)</div>
<div class="t" style="left:694.00px;top:297px;font-size:7.60px;line-height:10px;color:#e2e2e2;transform:scaleX(0.9655);transform-origin:0 50%;">Gaussian</div>
<div class="t" style="left:694.00px;top:307px;font-size:7.60px;line-height:10px;color:#e2e2e2;transform:scaleX(1.0394);transform-origin:0 50%;">Waveform</div>
<div class="t" style="left:694.00px;top:317px;font-size:7.60px;line-height:10px;color:#e2e2e2;letter-spacing:-0.008px;">Reference</div>
<div class="t" style="left:96.40px;top:2px;font-size:9.80px;line-height:13px;color:#1b3d8f;font-weight:700;transform:scaleX(1.050);transform-origin:0 50%;-webkit-text-stroke:0.3px #1b3d8f;">SIG<span style="color:#f08c1e;-webkit-text-stroke-color:#f08c1e">L</span>ENT</div>
<div class="t" style="left:149.60px;top:2px;font-size:9.80px;line-height:13px;color:#1c4c9e;-webkit-text-stroke:0.55px #1c4c9e;transform:scaleX(1.0815);transform-origin:0 50%;">SigIQPro</div>
</div>
</body></html>
